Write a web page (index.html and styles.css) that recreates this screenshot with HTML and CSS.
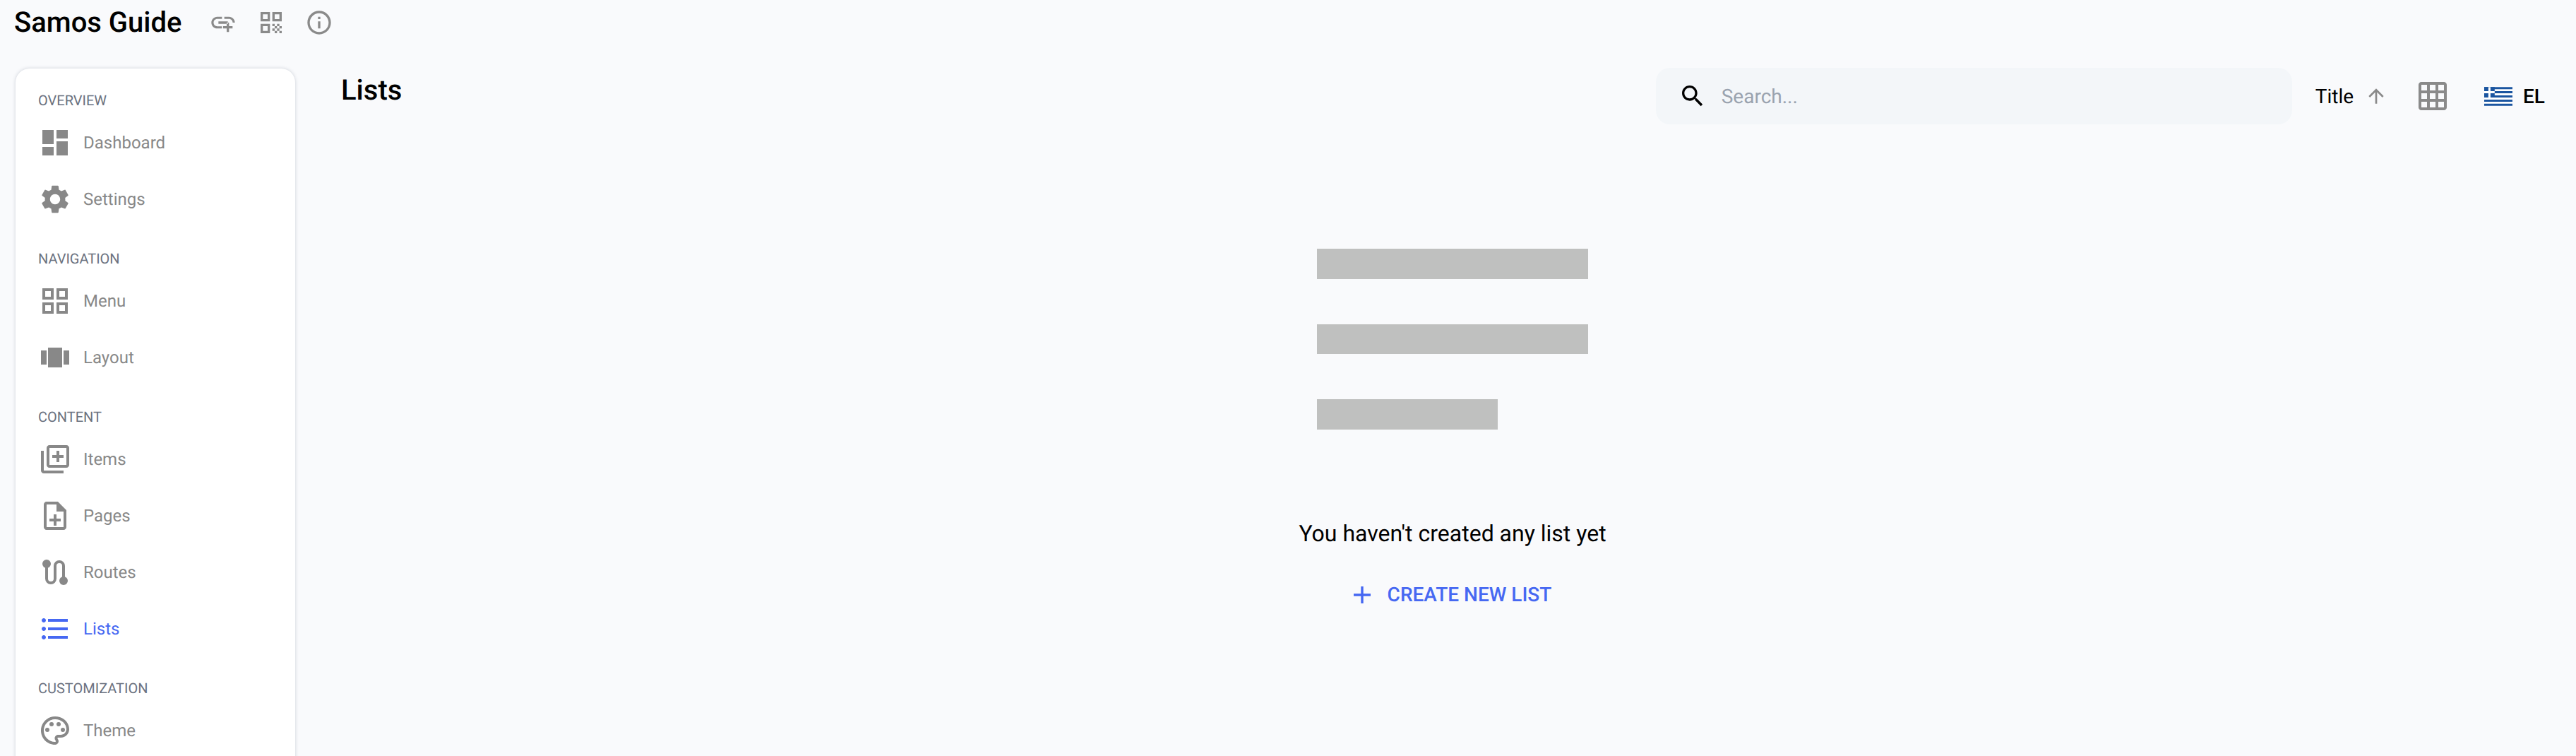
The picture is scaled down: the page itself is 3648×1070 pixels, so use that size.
FILE: index.html
```html
<!DOCTYPE html>
<html lang="en">
<head>
    <meta charset="UTF-8">
    <meta name="viewport" content="width=device-width, initial-scale=1.0">
    <title>Samos Guide - Lists</title>
    <link rel="stylesheet" href="styles.css">
</head>
<body>
    <header class="topbar">
        <h1 class="app-title">Samos Guide</h1>
        <div class="topbar-icons">
            <svg class="icon-top" viewBox="0 0 24 24"><path d="M8 11h8v2H8zm12.1 1H22c0-2.76-2.24-5-5-5h-4v1.9h4c1.71 0 3.1 1.39 3.1 3.1zM3.9 12c0-1.71 1.39-3.1 3.1-3.1h4V7H7c-2.76 0-5 2.24-5 5s2.24 5 5 5h4v-1.9H7c-1.71 0-3.1-1.39-3.1-3.1zM17 12h-2v3h-3v2h3v3h2v-3h3v-2h-3z"/></svg>
            <svg class="icon-top" viewBox="0 0 24 24"><path fill-rule="evenodd" d="M3 3h8v8H3zm2 2v4h4V5zM13 3h8v8h-8zm2 2v4h4V5zM3 13h8v8H3zm2 2v4h4v-4z"/><path d="M13 13h2v2h-2zM17 13h2v2h-2zM15 15h2v2h-2zM19 15h2v2h-2zM13 17h2v2h-2zM17 17h2v2h-2zM15 19h2v2h-2zM19 19h2v2h-2z"/></svg>
            <svg class="icon-top" viewBox="0 0 24 24"><path d="M11 7h2v2h-2zm0 4h2v6h-2zm1-9C6.48 2 2 6.48 2 12s4.48 10 10 10 10-4.48 10-10S17.52 2 12 2zm0 18c-4.41 0-8-3.59-8-8s3.59-8 8-8 8 3.59 8 8-3.59 8-8 8z"/></svg>
        </div>
    </header>

    <div class="layout">
        <nav class="sidebar">
            <div class="nav-section">
                <div class="nav-label">Overview</div>
                <div class="nav-item">
                    <svg class="icon-nav" viewBox="0 0 24 24"><path d="M3 13h8V3H3v10zm0 8h8v-6H3v6zm10 0h8V11h-8v10zm0-18v6h8V3h-8z"/></svg>
                    <span>Dashboard</span>
                </div>
                <div class="nav-item">
                    <svg class="icon-nav" viewBox="0 0 24 24"><path d="M19.14 12.94c.04-.3.06-.61.06-.94 0-.32-.02-.64-.07-.94l2.03-1.58c.18-.14.23-.41.12-.61l-1.92-3.32c-.12-.22-.37-.29-.59-.22l-2.39.96c-.5-.38-1.03-.7-1.62-.94l-.36-2.54c-.04-.24-.24-.41-.48-.41h-3.84c-.24 0-.43.17-.47.41l-.36 2.54c-.59.24-1.13.57-1.62.94l-2.39-.96c-.22-.08-.47 0-.59.22L2.74 8.87c-.12.21-.08.47.12.61l2.03 1.58c-.05.3-.09.63-.09.94s.02.64.07.94l-2.03 1.58c-.18.14-.23.41-.12.61l1.92 3.32c.12.22.37.29.59.22l2.39-.96c.5.38 1.03.7 1.62.94l.36 2.54c.05.24.24.41.48.41h3.84c.24 0 .44-.17.47-.41l.36-2.54c.59-.24 1.13-.56 1.62-.94l2.39.96c.22.08.47 0 .59-.22l1.92-3.32c.12-.22.07-.47-.12-.61l-2.01-1.58zM12 15.6c-1.98 0-3.6-1.62-3.6-3.6s1.62-3.6 3.6-3.6 3.6 1.62 3.6 3.6-1.62 3.6-3.6 3.6z"/></svg>
                    <span>Settings</span>
                </div>
            </div>
            <div class="nav-section">
                <div class="nav-label">Navigation</div>
                <div class="nav-item">
                    <svg class="icon-nav" viewBox="0 0 24 24"><path d="M3 3v8h8V3H3zm6 6H5V5h4v4zm-6 4v8h8v-8H3zm6 6H5v-4h4v4zm4-16v8h8V3h-8zm6 6h-4V5h4v4zm-6 4v8h8v-8h-8zm6 6h-4v-4h4v4z"/></svg>
                    <span>Menu</span>
                </div>
                <div class="nav-item">
                    <svg class="icon-nav" viewBox="0 0 24 24"><path d="M7 5h10v14H7zM2 7h4v10H2zM18 7h4v10h-4z"/></svg>
                    <span>Layout</span>
                </div>
            </div>
            <div class="nav-section">
                <div class="nav-label">Content</div>
                <div class="nav-item">
                    <svg class="icon-nav" viewBox="0 0 24 24"><path d="M4 6H2v14c0 1.1.9 2 2 2h14v-2H4V6zm16-4H8c-1.1 0-2 .9-2 2v12c0 1.1.9 2 2 2h12c1.1 0 2-.9 2-2V4c0-1.1-.9-2-2-2zm0 14H8V4h12v12zm-7-2h2v-3h3V9h-3V6h-2v3h-3v2h3z"/></svg>
                    <span>Items</span>
                </div>
                <div class="nav-item">
                    <svg class="icon-nav" viewBox="0 0 24 24"><path d="M14 2H6c-1.1 0-1.99.9-1.99 2L4 20c0 1.1.89 2 1.99 2H18c1.1 0 2-.9 2-2V8l-6-6zm4 18H6V4h7v5h5v11zm-7-1h2v-3h3v-2h-3v-3h-2v3H8v2h3z"/></svg>
                    <span>Pages</span>
                </div>
                <div class="nav-item">
                    <svg class="icon-nav" viewBox="0 0 24 24"><circle cx="6" cy="6" r="3"/><circle cx="18" cy="18" r="3"/><path class="route-line" d="M6 6v10.5a3 3 0 0 0 6 0v-9a3 3 0 0 1 6 0V18"/></svg>
                    <span>Routes</span>
                </div>
                <div class="nav-item active">
                    <svg class="icon-nav" viewBox="0 0 24 24"><path d="M4 10.5c-.83 0-1.5.67-1.5 1.5s.67 1.5 1.5 1.5 1.5-.67 1.5-1.5-.67-1.5-1.5-1.5zm0-6c-.83 0-1.5.67-1.5 1.5S3.17 7.5 4 7.5 5.5 6.83 5.5 6 4.83 4.5 4 4.5zm0 12c-.83 0-1.5.68-1.5 1.5s.68 1.5 1.5 1.5 1.5-.68 1.5-1.5-.67-1.5-1.5-1.5zM7 19h14v-2H7v2zm0-6h14v-2H7v2zm0-8v2h14V5H7z"/></svg>
                    <span>Lists</span>
                </div>
            </div>
            <div class="nav-section">
                <div class="nav-label">Customization</div>
                <div class="nav-item">
                    <svg class="icon-nav" viewBox="0 0 24 24"><path d="M12 22C6.49 22 2 17.51 2 12S6.49 2 12 2s10 4.04 10 9c0 3.31-2.69 6-6 6h-1.77c-.28 0-.5.22-.5.5 0 .12.05.23.13.33.41.47.64 1.06.64 1.67 0 1.38-1.12 2.5-2.5 2.5zm0-18c-4.41 0-8 3.59-8 8s3.59 8 8 8c.28 0 .5-.22.5-.5 0-.16-.08-.28-.14-.35-.41-.46-.63-1.05-.63-1.65 0-1.38 1.12-2.5 2.5-2.5H16c2.21 0 4-1.79 4-4 0-3.86-3.59-7-8-7z"/><circle cx="6.5" cy="11.5" r="1.5"/><circle cx="9.5" cy="7.5" r="1.5"/><circle cx="14.5" cy="7.5" r="1.5"/><circle cx="17.5" cy="11.5" r="1.5"/></svg>
                    <span>Theme</span>
                </div>
            </div>
        </nav>

        <main class="main-content">
            <div class="page-head">
                <h2 class="page-title">Lists</h2>
                <div class="toolbar">
                    <div class="search-box">
                        <svg class="icon-search" viewBox="0 0 24 24"><path d="M15.5 14h-.79l-.28-.27C15.41 12.59 16 11.11 16 9.5 16 5.91 13.09 3 9.5 3S3 5.91 3 9.5 5.91 16 9.5 16c1.61 0 3.09-.59 4.23-1.57l.27.28v.79l5 4.99L20.49 19l-4.99-5zm-6 0C7.01 14 5 11.99 5 9.5S7.01 5 9.5 5 14 7.01 14 9.5 11.99 14 9.5 14z"/></svg>
                        <span class="search-placeholder">Search...</span>
                    </div>
                    <div class="sort-btn">
                        <span>Title</span>
                        <svg class="icon-sort" viewBox="0 0 24 24"><path d="M4 12l1.41 1.41L11 7.83V20h2V7.83l5.58 5.59L20 12l-8-8-8 8z"/></svg>
                    </div>
                    <svg class="icon-grid" viewBox="0 0 24 24"><path d="M20 2H4c-1.1 0-2 .9-2 2v16c0 1.1.9 2 2 2h16c1.1 0 2-.9 2-2V4c0-1.1-.9-2-2-2zM8 20H4v-4h4v4zm0-6H4v-4h4v4zm0-6H4V4h4v4zm6 12h-4v-4h4v4zm0-6h-4v-4h4v4zm0-6h-4V4h4v4zm6 12h-4v-4h4v4zm0-6h-4v-4h4v4zm0-6h-4V4h4v4z"/></svg>
                    <div class="lang-btn">
                        <svg class="flag" viewBox="0 0 27 18">
                            <rect width="27" height="18" fill="#fff"/>
                            <path fill="#1b55a0" d="M0 0h27v2H0zM0 4h27v2H0zM0 8h27v2H0zM0 12h27v2H0zM0 16h27v2H0z"/>
                            <rect width="10" height="10" fill="#1b55a0"/>
                            <path fill="#fff" d="M4 0h2v10H4zM0 4h10v2H0z"/>
                        </svg>
                        <span>EL</span>
                    </div>
                </div>
            </div>

            <div class="empty-state">
                <div class="empty-bars">
                    <div class="empty-bar"></div>
                    <div class="empty-bar"></div>
                    <div class="empty-bar short"></div>
                </div>
                <p class="empty-text">You haven't created any list yet</p>
                <div class="create-btn">
                    <svg class="icon-add" viewBox="5 5 14 14"><path d="M19 13h-6v6h-2v-6H5v-2h6V5h2v6h6v2z"/></svg>
                    <span>CREATE NEW LIST</span>
                </div>
            </div>
        </main>
    </div>
</body>
</html>
```

FILE: styles.css
```css
body {
    margin: 0;
    height: 100vh;
    overflow: hidden;
    background: #f9fafc;
    color: #000;
    font-family: 'Roboto', sans-serif;
    text-rendering: geometricPrecision;
}

/* top bar */
.topbar {
    display: flex;
    align-items: center;
    height: 64px;
    padding-left: 20px;
}
.app-title {
    margin: 0;
    font-size: 40px;
    font-weight: 500;
    line-height: 64px;
}
.topbar-icons {
    display: flex;
    gap: 28px;
    margin-left: 38px;
}
.icon-top {
    width: 40px;
    height: 40px;
    fill: #8a8a8a;
    display: block;
}

.layout {
    display: flex;
    align-items: flex-start;
    padding: 33px 0 0 22px;
}

/* sidebar */
.sidebar {
    flex: 0 0 396px;
    box-sizing: border-box;
    padding: 25px 32px 40px;
    background: #fff;
    border-radius: 20px;
    box-shadow: 0 0 5px rgba(100, 110, 130, 0.3);
}
.nav-section + .nav-section {
    margin-top: 24px;
}
.nav-label {
    height: 40px;
    line-height: 40px;
    font-size: 20px;
    color: #6b7280;
    text-transform: uppercase;
}
.nav-item {
    display: flex;
    align-items: center;
    gap: 16px;
    height: 80px;
    font-size: 24px;
    color: #888;
}
.icon-nav {
    width: 48px;
    height: 48px;
    fill: #888;
    flex-shrink: 0;
}
.route-line {
    fill: none;
    stroke: #888;
    stroke-width: 2;
}
.nav-item.active {
    color: #4668f2;
}
.nav-item.active .icon-nav {
    fill: #4668f2;
}

/* main */
.main-content {
    flex: 1;
    margin-left: 48px;
    padding-left: 17px;
    box-sizing: border-box;
}
.page-head {
    display: flex;
    justify-content: space-between;
    align-items: flex-start;
    margin-top: -1px;
}
.page-title {
    margin: 0;
    font-size: 40px;
    font-weight: 500;
    line-height: 64px;
}
.toolbar {
    display: flex;
    align-items: center;
    height: 80px;
    padding-right: 44px;
    font-size: 28px;
}
.search-box {
    display: flex;
    align-items: center;
    width: 901px;
    height: 80px;
    padding-left: 32px;
    box-sizing: border-box;
    background: #f3f6f9;
    border-radius: 20px;
}
.icon-search {
    width: 40px;
    height: 40px;
    fill: #000;
    flex-shrink: 0;
}
.search-placeholder {
    margin-left: 21px;
    color: #9aa3af;
}
.sort-btn {
    display: flex;
    align-items: center;
    gap: 16px;
    margin-left: 33px;
}
.icon-sort {
    width: 32px;
    height: 32px;
    fill: #8a8a8a;
}
.icon-grid {
    width: 48px;
    height: 48px;
    fill: #8a8a8a;
    margin-left: 40px;
}
.lang-btn {
    display: flex;
    align-items: center;
    gap: 15px;
    margin-left: 49px;
    font-weight: 500;
}
.flag {
    width: 40px;
    height: 27px;
    display: block;
}

/* empty state */
.empty-state {
    display: flex;
    flex-direction: column;
    align-items: center;
    margin-left: -17px;
    padding-top: 176px;
}
.empty-bars {
    display: flex;
    flex-direction: column;
    gap: 64px;
    width: 384px;
}
.empty-bar {
    height: 42.67px;
    background: #bfc0bf;
}
.empty-bar.short {
    width: 256px;
}
.empty-text {
    margin: 125px 0 0;
    font-size: 32px;
    line-height: 44px;
}
.create-btn {
    display: flex;
    align-items: center;
    gap: 24px;
    height: 48px;
    margin-top: 41px;
    font-size: 28px;
    font-weight: 500;
    color: #4668f2;
}
.icon-add {
    width: 24px;
    height: 24px;
    fill: #4668f2;
}
```
